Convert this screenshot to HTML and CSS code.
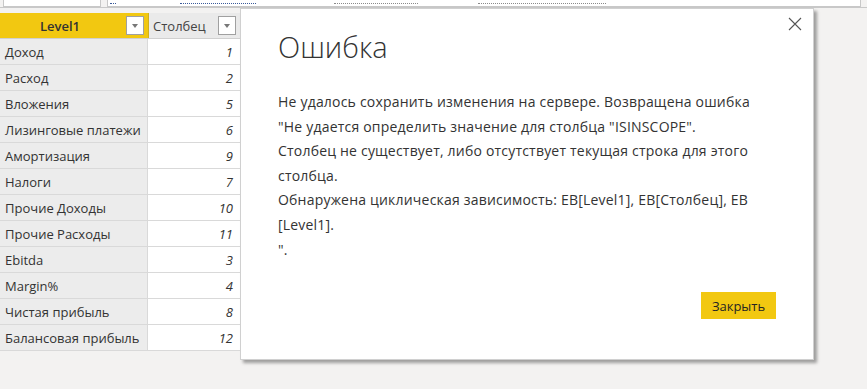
FILE: index.html
```html
<!DOCTYPE html>
<html>

<head>
    <meta name="viewport" content="width=device-width,initial-scale=1.0">
    <title>Ошибка</title>
    <link rel="stylesheet" href="styles.css">
</head>

<body>

    <div class="formula">
        <div class="field name"></div>
        <div class="field expr">
            <span class="mark" style="width: 6px; margin-left: 2px"></span>
            <span class="mark" style="width: 76px; margin-left: 64px"></span>
            <span class="mark light" style="width: 84px; margin-left: 78px"></span>
            <span class="mark light" style="width: 128px; margin-left: 60px"></span>
        </div>
    </div>

    <div class="grid">
        <div class="row head">
            <div class="cell key">Level1 <span class="drop"></span></div>
            <div class="cell val">Столбец <span class="drop"></span></div>
        </div>
        <div class="row"><div class="cell key">Доход</div><div class="cell val">1</div></div>
        <div class="row"><div class="cell key">Расход</div><div class="cell val">2</div></div>
        <div class="row"><div class="cell key">Вложения</div><div class="cell val">5</div></div>
        <div class="row"><div class="cell key">Лизинговые платежи</div><div class="cell val">6</div></div>
        <div class="row"><div class="cell key">Амортизация</div><div class="cell val">9</div></div>
        <div class="row"><div class="cell key">Налоги</div><div class="cell val">7</div></div>
        <div class="row"><div class="cell key">Прочие Доходы</div><div class="cell val">10</div></div>
        <div class="row"><div class="cell key">Прочие Расходы</div><div class="cell val">11</div></div>
        <div class="row"><div class="cell key">Ebitda</div><div class="cell val">3</div></div>
        <div class="row"><div class="cell key">Margin%</div><div class="cell val">4</div></div>
        <div class="row"><div class="cell key">Чистая прибыль</div><div class="cell val">8</div></div>
        <div class="row"><div class="cell key">Балансовая прибыль</div><div class="cell val">12</div></div>
    </div>

    <div class="dialog">
        <button class="close">
            <svg width="14" height="14" viewBox="0 0 14 14">
                <path d="M1 1 L13 13 M13 1 L1 13" stroke="#555" stroke-width="1.1" fill="none" />
            </svg>
        </button>
        <div class="title">Ошибка</div>
        <div class="message">
            Не удалось сохранить изменения на сервере. Возвращена ошибка<br>
            "Не удается определить значение для столбца "ISINSCOPE".<br>
            Столбец не существует, либо отсутствует текущая строка для этого<br>
            столбца.<br>
            Обнаружена циклическая зависимость: EB[Level1], EB[Столбец], EB<br>
            [Level1].<br>
            ".
        </div>
        <div class="actions">
            <button class="ok">Закрыть</button>
        </div>
    </div>

</body>

</html>
```

FILE: styles.css
```css
body {
    margin: 0;
    background-color: #f3f2f1;
    font-family: "Open Sans", "Noto Sans", sans-serif;
    color: #333;
    width: 867px;
    height: 389px;
    overflow: hidden;
}

.formula {
    display: flex;
    gap: 6px;
    padding: 0 0 0 3px;
    height: 7px;
    border-bottom: 1px solid #c8c8c8;
}

.field {
    background-color: #fff;
    border: 1px solid #c8c8c8;
    border-top: none;
    height: 6px;
    overflow: hidden;
}

.name {
    width: 96px;
}

.expr {
    flex: 1;
    margin-right: 6px;
    display: flex;
    align-items: flex-end;
}

.mark {
    height: 1px;
    margin-bottom: 2px;
    border-bottom: 1px dotted #3a5a9a;
}

.light {
    border-bottom-color: #8a8a8a;
}

.grid {
    margin-top: 5px;
    width: 240px;
    font-size: 13px;
}

.row {
    display: flex;
    height: 25px;
    border-bottom: 1px solid #d9d9d9;
}

.cell {
    display: flex;
    align-items: center;
}

.key {
    width: 142px;
    padding-left: 5px;
    background-color: #ececec;
    border-right: 1px solid #d9d9d9;
}

.val {
    flex: 1;
    justify-content: flex-end;
    padding-right: 7px;
    background-color: #fff;
    font-style: italic;
}

.head {
    height: 25px;
    border-bottom: 1px solid #d0d0d0;
}

.head .key {
    background-color: #f2c811;
    justify-content: space-between;
    padding-left: 40px;
    padding-right: 4px;
    width: 104px;
    font-weight: 600;
    border-right: 1px solid #d0b020;
}

.head .val {
    background-color: #eaeaea;
    justify-content: space-between;
    padding-left: 4px;
    padding-right: 4px;
    font-style: normal;
    color: #444;
}

.drop {
    width: 16px;
    height: 17px;
    background-color: #fff;
    border: 1px solid #a0a0a0;
    position: relative;
}

.drop::after {
    content: "";
    position: absolute;
    left: 5px;
    top: 7px;
    border-left: 3px solid transparent;
    border-right: 3px solid transparent;
    border-top: 4px solid #777;
}

.dialog {
    position: absolute;
    left: 240px;
    top: 8px;
    width: 574px;
    height: 352px;
    box-sizing: border-box;
    background-color: #fff;
    border: 1px solid #d0d0d0;
    box-shadow: 3px 3px 3px rgba(0, 0, 0, 0.35);
    padding: 16px 37px 0 37px;
    display: flex;
    flex-direction: column;
}

.close {
    position: absolute;
    right: 6px;
    top: 3px;
    width: 24px;
    height: 24px;
    border: none;
    background: none;
    padding: 5px;
}

.title {
    font-size: 29px;
    font-weight: 300;
    color: #333;
    line-height: 44px;
}

.message {
    margin-top: 21px;
    font-size: 14px;
    letter-spacing: 0.2px;
    line-height: 24.6px;
    color: #333;
}

.actions {
    display: flex;
    justify-content: flex-end;
    margin-top: 30px;
}

.ok {
    background-color: #f2c811;
    border: none;
    width: 75px;
    height: 27px;
    font-family: "Open Sans", "Noto Sans", sans-serif;
    font-size: 13px;
    color: #252423;
}
```
